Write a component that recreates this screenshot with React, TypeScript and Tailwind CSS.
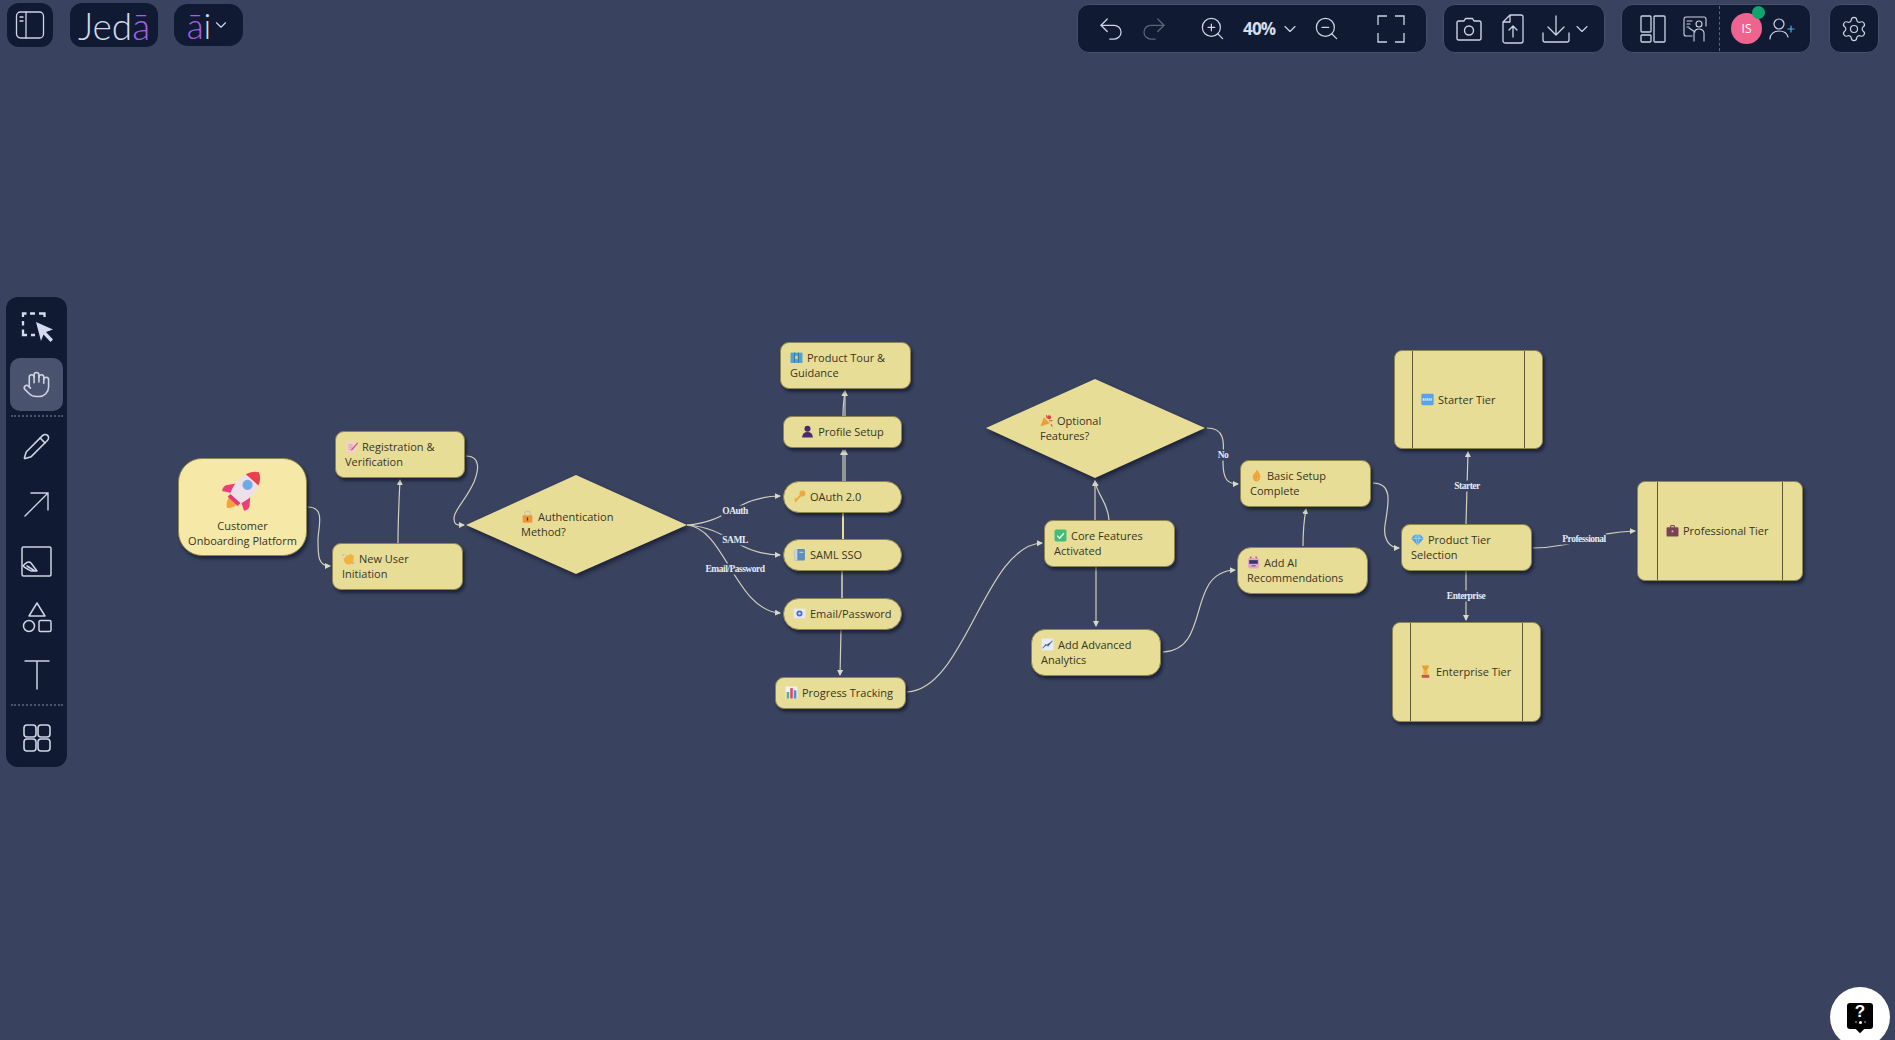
import React from "react";
import { ChevronDown, Hand, Pencil, Redo2, Settings, Undo2, ZoomIn, ZoomOut } from "lucide-react";

const iconColor = "text-[#cdd4e4]";

function Svg({ w, h, vb, children, sw = 1.5 }: { w: number; h: number; vb: string; children: React.ReactNode; sw?: number }) {
  return (
    <svg width={w} height={h} viewBox={vb} fill="none" stroke="currentColor" strokeWidth={sw} strokeLinecap="round" strokeLinejoin="round">
      {children}
    </svg>
  );
}

/* small emoji drawings, 12x12 */
const E = {
  memo: (
    <>
      <rect x="1.5" y="1.5" width="8" height="10" fill="#f0d0da" />
      <path d="M3 4.5h4M3 6.5h4M3 8.500h3" stroke="#c88" strokeWidth=".7" />
      <path d="M11.500 2 6 8l-1 2 2-.8 5-6z" fill="#d8607a" />
    </>
  ),
  wave: (
    <>
      <path d="M1.500 6.500 5 2.500l1 1L7.500 1.500l1.500 1 2 1L10.500 8.500c-1 2.500-3.500 3.500-5.500 3S1.500 8.500 1.500 6.500z" fill="#f3b13e" />
      <path d="M.5 3.500 2 2M9.500 11 11.500 9.500" stroke="#7a9cc8" strokeWidth=".8" />
    </>
  ),
  lock: (
    <>
      <path d="M3.500 6V3.500a2.500 2.500 0 0 1 5 0V6" stroke="#c9c3b8" strokeWidth="1.100" fill="none" />
      <rect x="1.500" y="4.800" width="9" height="7" rx="1" fill="#f0963a" />
      <rect x="5.400" y="6.800" width="1.200" height="3" fill="#5b3a1e" />
    </>
  ),
  map: (
    <>
      <rect x=".5" y="1.500" width="11" height="9.500" fill="#4fa3d4" />
      <path d="M4.200 1.500v9.500M7.800 1.500v9.500" stroke="#2b6f9c" strokeWidth=".7" />
      <path d="M4.800 4.500h2.400v3H4.800z" fill="#e8c86a" />
    </>
  ),
  person: (
    <>
      <circle cx="6" cy="3.500" r="2.800" fill="#4b2a70" />
      <path d="M1 11.500c.3-3.300 2-5 5-5s4.700 1.700 5 5z" fill="#4b2a70" />
    </>
  ),
  key: (
    <>
      <circle cx="8.700" cy="3.200" r="2.700" fill="#efa63a" />
      <path d="M7 5 1.800 10.800M3.300 9 2 7.800" stroke="#efa63a" strokeWidth="1.600" />
    </>
  ),
  books: (
    <>
      <rect x="1.500" y="1" width="9.500" height="10.500" rx=".8" fill="#5f8fb8" />
      <rect x="1.500" y="1" width="2.500" height="10.500" fill="#c8d7e3" />
      <path d="M6 4h3.500" stroke="#d7e6f0" strokeWidth=".8" />
    </>
  ),
  mail: (
    <>
      <rect x=".5" y="1.500" width="11" height="9" fill="#e8e6f0" />
      <circle cx="6" cy="6" r="2.800" fill="#4a72c4" />
      <circle cx="6" cy="6" r="1.100" fill="#cfdaf0" />
    </>
  ),
  bars: (
    <>
      <rect x=".5" y=".5" width="11" height="11" fill="#eef1f5" />
      <rect x="1.500" y="5.500" width="2.400" height="6" fill="#55b57c" />
      <rect x="4.800" y="2" width="2.400" height="9.500" fill="#d84a5f" />
      <rect x="8.100" y="4" width="2.400" height="7.500" fill="#4d8fd0" />
    </>
  ),
  check: (
    <>
      <rect x=".5" y=".5" width="11" height="11" rx="1.500" fill="#41bd7a" />
      <path d="m3 6.300 2.200 2.200L9.200 3.800" stroke="#f4fbf6" strokeWidth="1.300" fill="none" />
    </>
  ),
  party: (
    <>
      <path d="M.5 11.500 3.500 3l5.500 5.500z" fill="#ef9a3c" />
      <circle cx="8.500" cy="3" r="1.800" fill="#d9483b" />
      <path d="M6 1 6.500 4M11.500 6l-3 .5M10 9.500 11.500 11.500" stroke="#d9483b" strokeWidth="1" />
    </>
  ),
  thumb: (
    <>
      <path d="M6.500.5c1 1.700 3 3.500 3 6.500 0 3-1.500 4.500-3.500 4.500S2.500 9.500 2.500 7.500C2.500 5 5.500 3 6.500.5z" fill="#f0a63a" />
      <path d="M6 6c.8 1 1 2 .8 3.500" stroke="#f6d27a" strokeWidth=".9" />
    </>
  ),
  robot: (
    <>
      <rect x="1" y="1.500" width="10" height="10" rx="2" fill="#e0a7c8" />
      <rect x="2" y="3.800" width="8" height="3.400" fill="#3a3870" />
      <path d="M3 2 4 .5M9 2 8 .5" stroke="#c4406a" strokeWidth="1" />
      <rect x="4" y="8.500" width="4" height="1.100" fill="#7a5aa8" />
    </>
  ),
  trend: (
    <>
      <rect x=".5" y=".5" width="11" height="11" fill="#e8ecf5" />
      <path d="M1.500 9.500 4.500 6l2 1.500 4-5" stroke="#5b8fd8" strokeWidth="1" />
    </>
  ),
  gem: (
    <>
      <path d="M3 1.500h6L11.800 5 6 11.500.2 5z" fill="#43a8e6" />
      <path d="M3 1.500 4.500 5 6 1.500 7.500 5 9 1.500M.2 5h11.600M4.500 5 6 11.500 7.500 5" stroke="#bde4f8" strokeWidth=".5" fill="none" />
    </>
  ),
  free: (
    <>
      <rect x=".3" y=".8" width="11.400" height="10.400" rx="1" fill="#5aa3ec" />
      <path d="M1.500 6h9" stroke="#d8ebfb" strokeWidth="2.200" strokeDasharray="1.200 .6" />
    </>
  ),
  medal: (
    <>
      <path d="M2.500.5h7L7 6H5z" fill="#e5a12f" />
      <circle cx="6" cy="6.800" r="2.200" fill="#efb23e" />
      <rect x="2.500" y="9" width="7" height="2.800" fill="#c9584a" />
    </>
  ),
  case: (
    <>
      <path d="M4.300 3.500V1.500h3.400v2" stroke="#6a3a4a" strokeWidth=".9" fill="none" />
      <rect x=".5" y="3" width="11" height="8.500" rx=".8" fill="#7a4254" />
      <rect x="5.200" y="6" width="1.600" height="1.600" fill="#d8c2b8" />
    </>
  ),
};

function Emoji({ name }: { name: keyof typeof E }) {
  return (
    <svg width="13" height="13" viewBox="0 0 12 12" className="inline-block mr-[4px] align-[-2px]">
      {E[name]}
    </svg>
  );
}

const nodeText = "font-['Open_Sans',sans-serif] text-[11px] leading-[15px] text-[#37351f]";
const nodeBox = "absolute bg-[#e8dd97] border border-[#8f8550] shadow-[2px_3px_3px_rgba(10,14,30,0.55)] flex items-center";

function Node({ className, children }: { className: string; children: React.ReactNode }) {
  return <div className={`${nodeBox} ${nodeText} pb-[2px] ${className}`}>{children}</div>;
}

function Tier({ className, side, right, children }: { className: string; side: string; right: string; children: React.ReactNode }) {
  return (
    <div className={`${nodeBox} ${nodeText} rounded-[8px] items-stretch ${className}`}>
      <div className={`shrink-0 border-r border-[#5f5833] ${side}`} />
      <div className="flex-1 flex items-center pl-[8px] pb-[1px] whitespace-nowrap">{children}</div>
      <div className={`shrink-0 border-l border-[#5f5833] ${right}`} />
    </div>
  );
}

function EdgeLabel({ className, children }: { className: string; children: React.ReactNode }) {
  return (
    <div className={`absolute -translate-x-1/2 -translate-y-1/2 bg-[#39425e] px-[1px] font-['Liberation_Serif',serif] font-bold text-[9.500px] tracking-[-0.5px] leading-[11px] text-[#e6eaf4] whitespace-nowrap ${className}`}>
      {children}
    </div>
  );
}

const edges: string[] = [
  "M308,507 C326,507 318,528 318,540 C318,556 318,566 330,566",
  "M398,543 C398,520 399,500 400,480",
  "M466,456 C482,456 478,472 474,482 C466,500 454,510 454,518 C454,526 458,525 464,525",
  "M687,525 C730,522 735,497 780,496",
  "M687,525 C730,528 735,554 780,555",
  "M687,525 C725,528 735,610 780,613",
  "M843,481 L843,450",
  "M845,481 L845,450",
  "M843,416 C843,405 844,398 845,391",
  "M845,416 L845,391",
  "M841,629 L840,675",
  "M907,692 C965,690 985,545 1042,543",
  "M1095,520 L1095,481",
  "M1109,520 C1108,502 1097,495 1095,481",
  "M1096,567 L1096,626",
  "M1163,652 C1212,650 1185,572 1235,570",
  "M1207,428 C1228,428 1223,448 1223,462 C1223,480 1228,484 1238,484",
  "M1303,546 C1303,530 1304,520 1306,509",
  "M1373,483 C1394,483 1388,505 1385,525 C1383,540 1390,548 1399,548",
  "M1466,524 L1468,452",
  "M1466,571 L1466,620",
  "M1533,548 C1580,547 1590,532 1635,531",
];

function Rocket() {
  return (
    <svg width="50" height="50" viewBox="0 0 44 44" className="block">
      <g transform="rotate(42 22 22)">
        <path d="M17 33c0 5 3 9 5 10 2-1 5-5 5-10z" fill="#f7a13a" />
        <path d="M15 20 8 29c-1 2 0 5 1 6l7-4zM29 20l7 9c1 2 0 5-1 6l-7-4z" fill="#ea3f7c" />
        <path d="M22 1c7 4 9 13 9 19 0 5-2 10-3 13H16c-1-3-3-8-3-13 0-6 2-15 9-19z" fill="#eee0ea" />
        <path d="M22 1c4 2 6 5 7.500 9h-15C16 6 18 3 22 1z" fill="#ec3f4e" />
        <circle cx="22" cy="16" r="4.500" fill="#90a4d0" />
        <circle cx="22" cy="16" r="3.200" fill="#5fb0ee" />
        <rect x="16" y="32" width="12" height="3.500" fill="#e53a76" />
      </g>
    </svg>
  );
}

function SelectIcon() {
  return (
    <svg width="36" height="32" viewBox="0 0 36 32" fill="none" stroke="currentColor" strokeWidth="2.300">
      <path d="M4 6V2.500h3.500M11 2.500h5M20 2.500h5.500V6M4 10v4.500M4 18.500V24h4M12 24h4" />
      <path d="M17 11 34 18.500l-7 2.500 7 7.500-2.500 2.500-7-7.500-2.500 6.500z" fill="currentColor" stroke="none" />
    </svg>
  );
}

function Sep() {
  return <div className="w-0 self-stretch my-[1px] border-l border-dashed border-[#5b647d]" />;
}

function Group({ className, children }: { className: string; children: React.ReactNode }) {
  return (
    <div className={`h-[49px] flex items-center bg-[#111a33] rounded-[12px] border border-[#474f6b] ${iconColor} ${className}`}>
      {children}
    </div>
  );
}

export default function App() {
  return (
    <div className="relative w-screen h-screen overflow-hidden bg-[#39425e] font-['Open_Sans',sans-serif]">
      {/* top bar */}
      <div className="absolute inset-x-0 top-[4px] flex items-start">
        <div className="ml-[7px] mt-[-1px] w-[46px] h-[44px] rounded-[12px] bg-[#111a33] flex items-center justify-center text-[#cdd4e4]">
          <Svg w={30} h={30} vb="0 0 30 30" sw={1.3}>
            <rect x="1.500" y="2" width="27" height="26" rx="4" />
            <path d="M11 2v26M5 7h3M5 11h3" />
          </Svg>
        </div>
        <div className="ml-[17px] mt-[-1px] w-[88px] h-[44px] rounded-[12px] bg-[#111a33] flex items-center justify-center font-['Lato',sans-serif] font-light text-[37px] leading-none text-[#d3d9e8]">
          Jed<span className="text-[#a65fe6]">ā</span>
        </div>
        <div className="ml-[16px] w-[69px] h-[42px] rounded-[14px] bg-[#111a33] flex items-center justify-center font-['Lato',sans-serif] font-light text-[35px] leading-none text-[#d3d9e8]">
          <span className="text-[#a65fe6]">ā</span>i
          <ChevronDown size={18} strokeWidth={1.500} className="ml-[1px]" />
        </div>

        <div className="ml-auto mr-[16px] flex gap-[16px]">
          <Group className="w-[350px] pl-[12px]">
            <div className="w-[42px] flex justify-center"><Undo2 size={30} strokeWidth={1} /></div>
            <div className="w-[42px] ml-[1px] flex justify-center text-[#5c6478]"><Redo2 size={30} strokeWidth={1} /></div>
            <div className="ml-[9px]"><Sep /></div>
            <div className="w-[42px] ml-[6px] flex justify-center"><ZoomIn size={27} strokeWidth={1.100} /></div>
            <span className="ml-[10px] w-[36px] text-[17px] font-bold tracking-[-0.8px] text-[#d8ddea]">40%</span>
            <ChevronDown size={20} strokeWidth={1.400} className="ml-[1px]" />
            <div className="w-[42px] ml-[5px] flex justify-center"><ZoomOut size={27} strokeWidth={1.100} /></div>
            <div className="ml-[7px]"><Sep /></div>
            <div className="w-[36px] ml-[18px] flex justify-center">
              <Svg w={28} h={28} vb="0 0 28 28" sw={1.300}>
                <path d="M1 10V1h9M18 1h9v9M27 18v9h-9M10 27H1v-9" strokeLinecap="butt" strokeLinejoin="miter" />
              </Svg>
            </div>
          </Group>
          <Group className="w-[162px] pl-[11px]">
            <div className="w-[28px] flex justify-center">
              <Svg w={26} h={24} vb="0 0 26 24" sw={1.400}>
                <path d="M8 4 9.500 1.500h7L18 4h5.500A1.500 1.500 0 0 1 25 5.500v16a1.500 1.500 0 0 1-1.500 1.500h-21A1.500 1.500 0 0 1 1 21.500v-16A1.500 1.500 0 0 1 2.500 4z" />
                <circle cx="13" cy="13.500" r="4.500" />
              </Svg>
            </div>
            <div className="w-[24px] ml-[18px] flex justify-center">
              <Svg w={22} h={30} vb="0 0 22 30" sw={1.300}>
                <path d="M8 1h11a2 2 0 0 1 2 2v24a2 2 0 0 1-2 2H3a2 2 0 0 1-2-2V8zM8 1v7H1" />
                <path d="M11 23V12M7 16l4-4 4 4" />
              </Svg>
            </div>
            <div className="w-[28px] ml-[17px] flex justify-center">
              <Svg w={28} h={28} vb="0 0 28 28" sw={1.300}>
                <path d="M14 1v18M6 12l8 8 8-8M1 18v7a2 2 0 0 0 2 2h22a2 2 0 0 0 2-2v-7" />
              </Svg>
            </div>
            <ChevronDown size={20} strokeWidth={1.300} className="ml-[2px]" />
          </Group>
          <Group className="w-[190px] pl-[18px] relative">
            <div className="w-[26px] flex justify-center">
              <Svg w={26} h={28} vb="0 0 26 28" sw={1.300}>
                <rect x="1" y="1" width="10" height="16" rx="1" />
                <rect x="1" y="20" width="10" height="7" rx="1" />
                <rect x="14" y="1" width="11" height="26" rx="1" />
              </Svg>
            </div>
            <div className="w-[24px] ml-[17px] flex justify-center">
              <Svg w={24} h={26} vb="0 0 24 26" sw={1.100}>
                <path d="M9 20H3a2 2 0 0 1-2-2V3a2 2 0 0 1 2-2h18a2 2 0 0 1 2 2v7" />
                <path d="M4 5h5M4 8h3M4 11h2" />
                <circle cx="16" cy="8" r="3" />
                <path d="M11 25v-8c0-2 2-4 5-4s5 2 5 4v8M6 12l6 4" />
              </Svg>
            </div>
            <div className="ml-[12px] h-full flex"><Sep /></div>
            <div className="ml-[11px] relative w-[31px] h-[31px] rounded-full bg-[#ef648e] flex items-center justify-center text-[12px] text-white">
              IS
              <div className="absolute right-[-3px] top-[-7px] w-[13px] h-[13px] rounded-full bg-[#0fa56c]" />
            </div>
            <div className="ml-[7px] w-[26px] flex justify-center">
              <svg width="26" height="24" viewBox="0 0 26 24" fill="none" stroke="currentColor" strokeWidth="1.200" strokeLinecap="round">
                <circle cx="10" cy="7" r="5" />
                <path d="M1 22c0-5 4-8 9-8s8 2 9 6" />
                <path d="M22 9v6M19 12h6" stroke="#4fb0e0" />
              </svg>
            </div>
          </Group>
          <div className="ml-[2px] w-[50px] h-[49px] rounded-[12px] bg-[#111a33] border border-[#474f6b] flex items-center justify-center text-[#cdd4e4]">
            <Settings size={28} strokeWidth={1} />
          </div>
        </div>
      </div>

      {/* left tool rail */}
      <div className="absolute left-[6px] top-[297px] w-[61px] h-[470px] rounded-[12px] bg-[#111a33] flex flex-col items-center text-[#cdd4e4]">
        <div className="mt-[4px] h-[52px] flex items-center justify-center text-[#d3dcee]"><SelectIcon /></div>
        <div className="mt-[5px] w-[53px] h-[53px] rounded-[10px] bg-[#4a536e] flex items-center justify-center"><Hand size={29} strokeWidth={1.300} /></div>
        <div className="mt-[4px] w-[52px] border-t-2 border-dotted border-[#4a536e]" />
        <div className="mt-[3px] h-[52px] flex items-center justify-center"><Pencil size={29} strokeWidth={1.300} /></div>
        <div className="mt-[6px] h-[52px] flex items-center justify-center">
          <Svg w={27} h={27} vb="0 0 27 27" sw={1.400}><path d="M2 25 25 2M8 2h17v17" strokeLinejoin="miter" /></Svg>
        </div>
        <div className="mt-[5px] h-[52px] flex items-center justify-center">
          <Svg w={31} h={31} vb="0 0 31 31" sw={1.500}>
            <rect x="1" y="1" width="29" height="29" rx="1.500" />
            <path d="M2 20c3-4 6-5 8-3l6 8-6 0c-3-2-6-3-8-5zM6 20l8 5" />
          </Svg>
        </div>
        <div className="mt-[5px] h-[52px] flex items-center justify-center">
          <Svg w={30} h={32} vb="0 0 30 32" sw={1.500}>
            <path d="M15 1 23 14H7z" />
            <circle cx="7" cy="24" r="5.500" />
            <rect x="17" y="18.500" width="12" height="11" rx="1.500" />
          </Svg>
        </div>
        <div className="mt-[4px] h-[52px] flex items-center justify-center">
          <Svg w={26} h={31} vb="0 0 26 31" sw={1.500}><path d="M1 2h24M13 2v28" /></Svg>
        </div>
        <div className="mt-[4px] w-[52px] border-t-2 border-dotted border-[#4a536e]" />
        <div className="mt-[6px] h-[52px] flex items-center justify-center">
          <Svg w={28} h={28} vb="0 0 28 28" sw={1.600}>
            <rect x="1" y="1" width="12" height="12" rx="3" />
            <rect x="15" y="1" width="12" height="12" rx="3" />
            <rect x="1" y="15" width="12" height="12" rx="3" />
            <rect x="15" y="15" width="12" height="12" rx="3" />
          </Svg>
        </div>
      </div>

      {/* flow edges */}
      <svg className="absolute inset-0 w-full h-full" fill="none">
        <defs>
          <marker id="arrow" markerWidth="7" markerHeight="7" refX="5" refY="3" orient="auto" markerUnits="userSpaceOnUse">
            <path d="M0 0 6 3 0 6z" fill="#d8d9c4" />
          </marker>
        </defs>
        <path d="M843,512 L843,539" stroke="#e8dd97" strokeWidth="2" />
        <path d="M842,571 L842,598" stroke="#d8d9c4" strokeWidth="1.500" />
        {edges.map((d) => (
          <path key={d} d={d} stroke="#d0d1be" strokeWidth="1.200" markerEnd="url(#arrow)" />
        ))}
      </svg>

      {/* diamonds */}
      <svg className="absolute left-[460px] top-[470px] drop-shadow-[2px_3px_2px_rgba(10,14,30,0.6)]" width="232" height="110">
        <polygon points="6,55 116,5 227,55 116,104" fill="#e8dd97" />
      </svg>
      <div className={`absolute left-[521px] top-[509px] ${nodeText}`}>
        <Emoji name="lock" />Authentication<br />Method?
      </div>
      <svg className="absolute left-[980px] top-[374px] drop-shadow-[2px_3px_2px_rgba(10,14,30,0.6)]" width="232" height="110">
        <polygon points="6,54 115,5 225,54 115,104" fill="#e8dd97" />
      </svg>
      <div className={`absolute left-[1040px] top-[413px] ${nodeText}`}>
        <Emoji name="party" />Optional<br />Features?
      </div>

      {/* nodes */}
      <div className={`${nodeBox} ${nodeText} left-[178px] top-[458px] w-[129px] h-[98px] rounded-[24px] bg-[#f6e9a7] flex-col justify-start pt-[6px] text-center`}>
        <Rocket />
        <div className="mt-[3px]">Customer<br />Onboarding Platform</div>
      </div>
      <Node className="left-[335px] top-[431px] w-[130px] h-[47px] rounded-[9px] pl-[9px]"><div><Emoji name="memo" />Registration &amp;<br />Verification</div></Node>
      <Node className="left-[332px] top-[543px] w-[131px] h-[47px] rounded-[9px] pl-[9px]"><div><Emoji name="wave" />New User<br />Initiation</div></Node>
      <Node className="left-[780px] top-[342px] w-[131px] h-[47px] rounded-[9px] pl-[9px]"><div><Emoji name="map" />Product Tour &amp;<br />Guidance</div></Node>
      <Node className="left-[783px] top-[416px] w-[119px] h-[32px] rounded-[9px] justify-center"><div><Emoji name="person" />Profile Setup</div></Node>
      <Node className="left-[783px] top-[481px] w-[119px] h-[32px] rounded-[16px] pl-[9px]"><div><Emoji name="key" />OAuth 2.0</div></Node>
      <Node className="left-[783px] top-[539px] w-[119px] h-[32px] rounded-[16px] pl-[9px]"><div><Emoji name="books" />SAML SSO</div></Node>
      <Node className="left-[783px] top-[598px] w-[119px] h-[32px] rounded-[16px] pl-[9px]"><div><Emoji name="mail" />Email/Password</div></Node>
      <Node className="left-[775px] top-[677px] w-[131px] h-[32px] rounded-[9px] pl-[9px]"><div><Emoji name="bars" />Progress Tracking</div></Node>
      <Node className="left-[1044px] top-[520px] w-[131px] h-[47px] rounded-[9px] pl-[9px]"><div><Emoji name="check" />Core Features<br />Activated</div></Node>
      <Node className="left-[1031px] top-[629px] w-[130px] h-[47px] rounded-[14px] pl-[9px]"><div><Emoji name="trend" />Add Advanced<br />Analytics</div></Node>
      <Node className="left-[1240px] top-[460px] w-[131px] h-[47px] rounded-[9px] pl-[9px]"><div><Emoji name="thumb" />Basic Setup<br />Complete</div></Node>
      <Node className="left-[1237px] top-[547px] w-[131px] h-[47px] rounded-[14px] pl-[9px]"><div><Emoji name="robot" />Add AI<br />Recommendations</div></Node>
      <Node className="left-[1401px] top-[524px] w-[131px] h-[47px] rounded-[9px] pl-[9px]"><div><Emoji name="gem" />Product Tier<br />Selection</div></Node>

      <Tier className="left-[1394px] top-[350px] w-[149px] h-[99px]" side="w-[18px]" right="w-[18px]"><div><Emoji name="free" />Starter Tier</div></Tier>
      <Tier className="left-[1637px] top-[481px] w-[166px] h-[100px]" side="w-[20px]" right="w-[20px]"><div><Emoji name="case" />Professional Tier</div></Tier>
      <Tier className="left-[1392px] top-[622px] w-[149px] h-[100px]" side="w-[18px]" right="w-[18px]"><div><Emoji name="medal" />Enterprise Tier</div></Tier>

      {/* edge labels */}
      <EdgeLabel className="left-[735px] top-[511px]">OAuth</EdgeLabel>
      <EdgeLabel className="left-[735px] top-[540px]">SAML</EdgeLabel>
      <EdgeLabel className="left-[735px] top-[569px]">Email/Password</EdgeLabel>
      <EdgeLabel className="left-[1223px] top-[455px]">No</EdgeLabel>
      <EdgeLabel className="left-[1467px] top-[486px]">Starter</EdgeLabel>
      <EdgeLabel className="left-[1466px] top-[596px]">Enterprise</EdgeLabel>
      <EdgeLabel className="left-[1584px] top-[539px]">Professional</EdgeLabel>

      {/* help bubble */}
      <div className="absolute left-[1830px] top-[987px] w-[60px] h-[60px] rounded-full bg-white flex items-center justify-center">
        <div className="relative w-[26px] h-[26px] mt-[-3px] rounded-[3px] bg-black flex flex-col items-center text-white">
          <span className="font-['Liberation_Sans',sans-serif] font-bold text-[17px] leading-[18px]">?</span>
          <div className="flex gap-[2px]">
            <div className="w-[2px] h-[2px] rounded-full bg-[#777]" />
            <div className="w-[3px] h-[3px] rounded-full bg-white" />
            <div className="w-[2px] h-[2px] rounded-full bg-[#777]" />
          </div>
          <div className="absolute bottom-[-3px] w-[6px] h-[6px] rotate-45 bg-black -z-0" />
        </div>
      </div>
    </div>
  );
}
